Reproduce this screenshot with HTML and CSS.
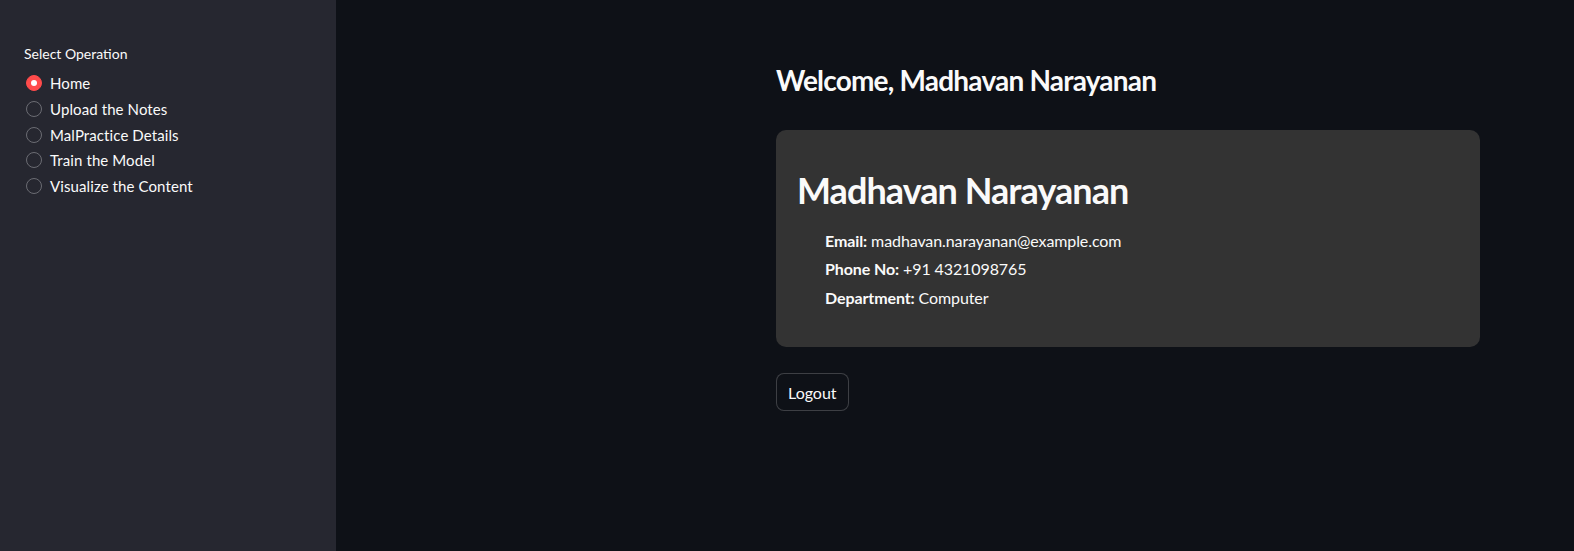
FILE: index.html
```html
<!DOCTYPE html>
<html>
<head>
<meta charset="utf-8">
<link rel="stylesheet" href="styles.css">
</head>
<body>
<div class="app">
  <aside class="sidebar">
    <div class="widget-label">Select Operation</div>
    <div class="radio-group">
      <label class="radio selected"><span class="dot"></span><span class="text">Home</span></label>
      <label class="radio"><span class="dot"></span><span class="text">Upload the Notes</span></label>
      <label class="radio"><span class="dot"></span><span class="text">MalPractice Details</span></label>
      <label class="radio"><span class="dot"></span><span class="text">Train the Model</span></label>
      <label class="radio"><span class="dot"></span><span class="text">Visualize the Content</span></label>
    </div>
  </aside>
  <main class="main">
    <div class="content">
      <h3 class="welcome">Welcome, Madhavan Narayanan</h3>
      <div class="card">
        <h2 class="card-title">Madhavan Narayanan</h2>
        <div class="details">
          <p><strong>Email:</strong> madhavan.narayanan@example.com</p>
          <p><strong>Phone No:</strong> +91 4321098765</p>
          <p><strong>Department:</strong> Computer</p>
        </div>
      </div>
      <button class="btn">Logout</button>
    </div>
  </main>
</div>
</body>
</html>
```
FILE: styles.css
```css
html, body {
  margin: 0;
  padding: 0;
  height: 100%;
}
body {
  font-family: "Lato", "Noto Sans", sans-serif;
  color: #fafafa;
  background: #0e1117;
}
.app {
  display: flex;
  height: 551px;
}
.sidebar {
  width: 336px;
  flex: none;
  background: #262730;
  padding: 44px 24px 0 24px;
  box-sizing: border-box;
}
.widget-label {
  font-size: 14px;
  line-height: 20px;
  margin-bottom: 6.6px;
}
.radio-group {
  display: flex;
  flex-direction: column;
}
.radio {
  display: flex;
  align-items: center;
  height: 25.6px;
  font-size: 15px;
  letter-spacing: 0.1px;
}
.dot {
  width: 16px;
  height: 16px;
  box-sizing: border-box;
  border-radius: 50%;
  border: 1px solid #6b6c73;
  margin-left: 2px;
  margin-right: 8px;
  position: relative;
  flex: none;
}
.radio.selected .dot {
  background: #ff4b4b;
  border-color: #ff4b4b;
}
.radio.selected .dot::after {
  content: "";
  position: absolute;
  left: 4px;
  top: 4px;
  width: 6px;
  height: 6px;
  border-radius: 50%;
  background: #fff;
}
.main {
  flex: 1;
  padding-left: 440px;
  padding-top: 62px;
}
.content {
  width: 704px;
}
.welcome {
  margin: 0;
  font-size: 28px;
  font-weight: 700;
  line-height: 36px;
  letter-spacing: -0.8px;
}
.card {
  margin-top: 32px;
  background: #333333;
  border-radius: 10px;
  padding: 38px 21px 30px 21px;
  height: 217px;
  box-sizing: border-box;
}
.card-title {
  margin: 0;
  font-size: 36px;
  font-weight: 700;
  line-height: 44px;
  letter-spacing: -0.95px;
}
.details {
  margin-top: 14.5px;
  padding-left: 28px;
}
.details p {
  margin: 0;
  font-size: 16px;
  line-height: 28.8px;
  letter-spacing: -0.1px;
}
.details strong {
  font-weight: 700;
}
.btn {
  margin-top: 26px;
  font-family: inherit;
  font-size: 16px;
  color: #fafafa;
  background: #0e1117;
  border: 1px solid rgba(250, 250, 250, 0.2);
  border-radius: 8px;
  height: 38px;
  padding: 0 11px;
}
```
